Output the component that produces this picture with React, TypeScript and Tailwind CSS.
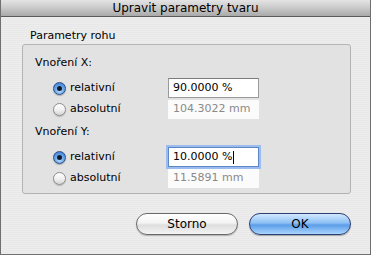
import React from 'react';

const font = { fontFamily: '"DejaVu Sans", Verdana, sans-serif' };

const Radio = ({ checked }: { checked: boolean }) =>
  checked ? (
    <span className="flex h-[13px] w-[13px] shrink-0 items-center justify-center rounded-full border border-[#2d4f8a] bg-[radial-gradient(circle_at_50%_70%,#bfe0ff_0%,#6aa8ec_45%,#2f6fc9_100%)] shadow-[0_1px_1px_rgba(0,0,0,0.25)]">
      <span className="h-[5px] w-[5px] rounded-full bg-[#121a2a]" />
    </span>
  ) : (
    <span className="h-[13px] w-[13px] shrink-0 rounded-full border border-[#8d8d8d] bg-[linear-gradient(180deg,#ffffff_0%,#f2f2f2_50%,#d5d5d5_100%)] shadow-[0_1px_1px_rgba(0,0,0,0.2)]" />
  );

const Row = ({
  label,
  checked,
  value,
  active,
  focused,
}: {
  label: string;
  checked: boolean;
  value: string;
  active: boolean;
  focused?: boolean;
}) => (
  <div className="flex h-[20px] items-center">
    <div className="flex w-[133px] items-center gap-[4px] pl-[18px]">
      <Radio checked={checked} />
      <span className="text-[11px] text-black">{label}</span>
    </div>
    {active ? (
      <div
        className={`flex h-[20px] w-[91px] items-center bg-white pl-[4px] text-[11px] text-black ${
          focused
            ? 'border border-[#5b86c8] shadow-[0_0_0_2px_#9bbcec]'
            : 'border border-[#9a9a9a] border-t-[#7c7c7c]'
        }`}
      >
        {value}
        {focused && <span className="ml-[1px] h-[13px] w-px bg-black" />}
      </div>
    ) : (
      <div className="flex h-[19px] w-[91px] items-center bg-[#fbfbfb] pl-[5px] text-[11px] text-[#8a8a8a]">
        {value}
      </div>
    )}
  </div>
);

export default function App() {
  return (
    <div
      style={font}
      className="flex h-[255px] w-[371px] flex-col overflow-hidden border border-t-0 border-[#6f6f6f] bg-[repeating-linear-gradient(0deg,#ededed_0px,#ededed_1px,#e8e8e8_1px,#e8e8e8_2px)]"
    >
      {/* Title bar */}
      <div className="flex h-[17px] shrink-0 items-center justify-center border-b border-[#5a5a5a] bg-[linear-gradient(180deg,#e4e4e4_0%,#c9c9c9_50%,#a9a9a9_100%)] text-[12px] text-black">
        Upravit parametry tvaru
      </div>

      <div className="flex flex-col pl-[21px] pr-[19px]">
        <div className="pl-[8px] pt-[12px] text-[11px] leading-[14px] text-black">Parametry rohu</div>

        {/* Group box */}
        <div className="mt-[1px] flex h-[150px] flex-col rounded-[3px] border border-[#b3b3b3] bg-[#e2e2e2] pl-[12px] pt-[10px]">
          <div className="h-[16px] text-[11px] leading-[16px] text-black">Vnoření X:</div>
          <div className="mt-[7px] flex flex-col gap-[1px]">
            <Row label="relativní" checked value="90.0000 %" active />
            <Row label="absolutní" checked={false} value="104.3022 mm" active={false} />
          </div>
          <div className="mt-[5px] h-[16px] text-[11px] leading-[16px] text-black">Vnoření Y:</div>
          <div className="mt-[7px] flex flex-col gap-[1px]">
            <Row label="relativní" checked value="10.0000 %" active focused />
            <Row label="absolutní" checked={false} value="11.5891 mm" active={false} />
          </div>
        </div>

        {/* Buttons */}
        <div className="mt-[19px] flex justify-end gap-[11px]">
          <button className="h-[22px] w-[102px] rounded-full border border-[#6a6a6a] bg-[linear-gradient(180deg,#ffffff_0%,#f3f3f3_45%,#dedede_55%,#f4f4f4_100%)] text-[12px] text-black shadow-[0_1px_1px_rgba(0,0,0,0.25)]">
            Storno
          </button>
          <button className="h-[22px] w-[102px] rounded-full border border-[#2c3f73] bg-[linear-gradient(180deg,#d3e8ff_0%,#8cc0f5_45%,#5c9de8_55%,#a9d6ff_100%)] text-[12px] text-black shadow-[0_1px_1px_rgba(0,0,0,0.3)]">
            OK
          </button>
        </div>
      </div>
    </div>
  );
}
